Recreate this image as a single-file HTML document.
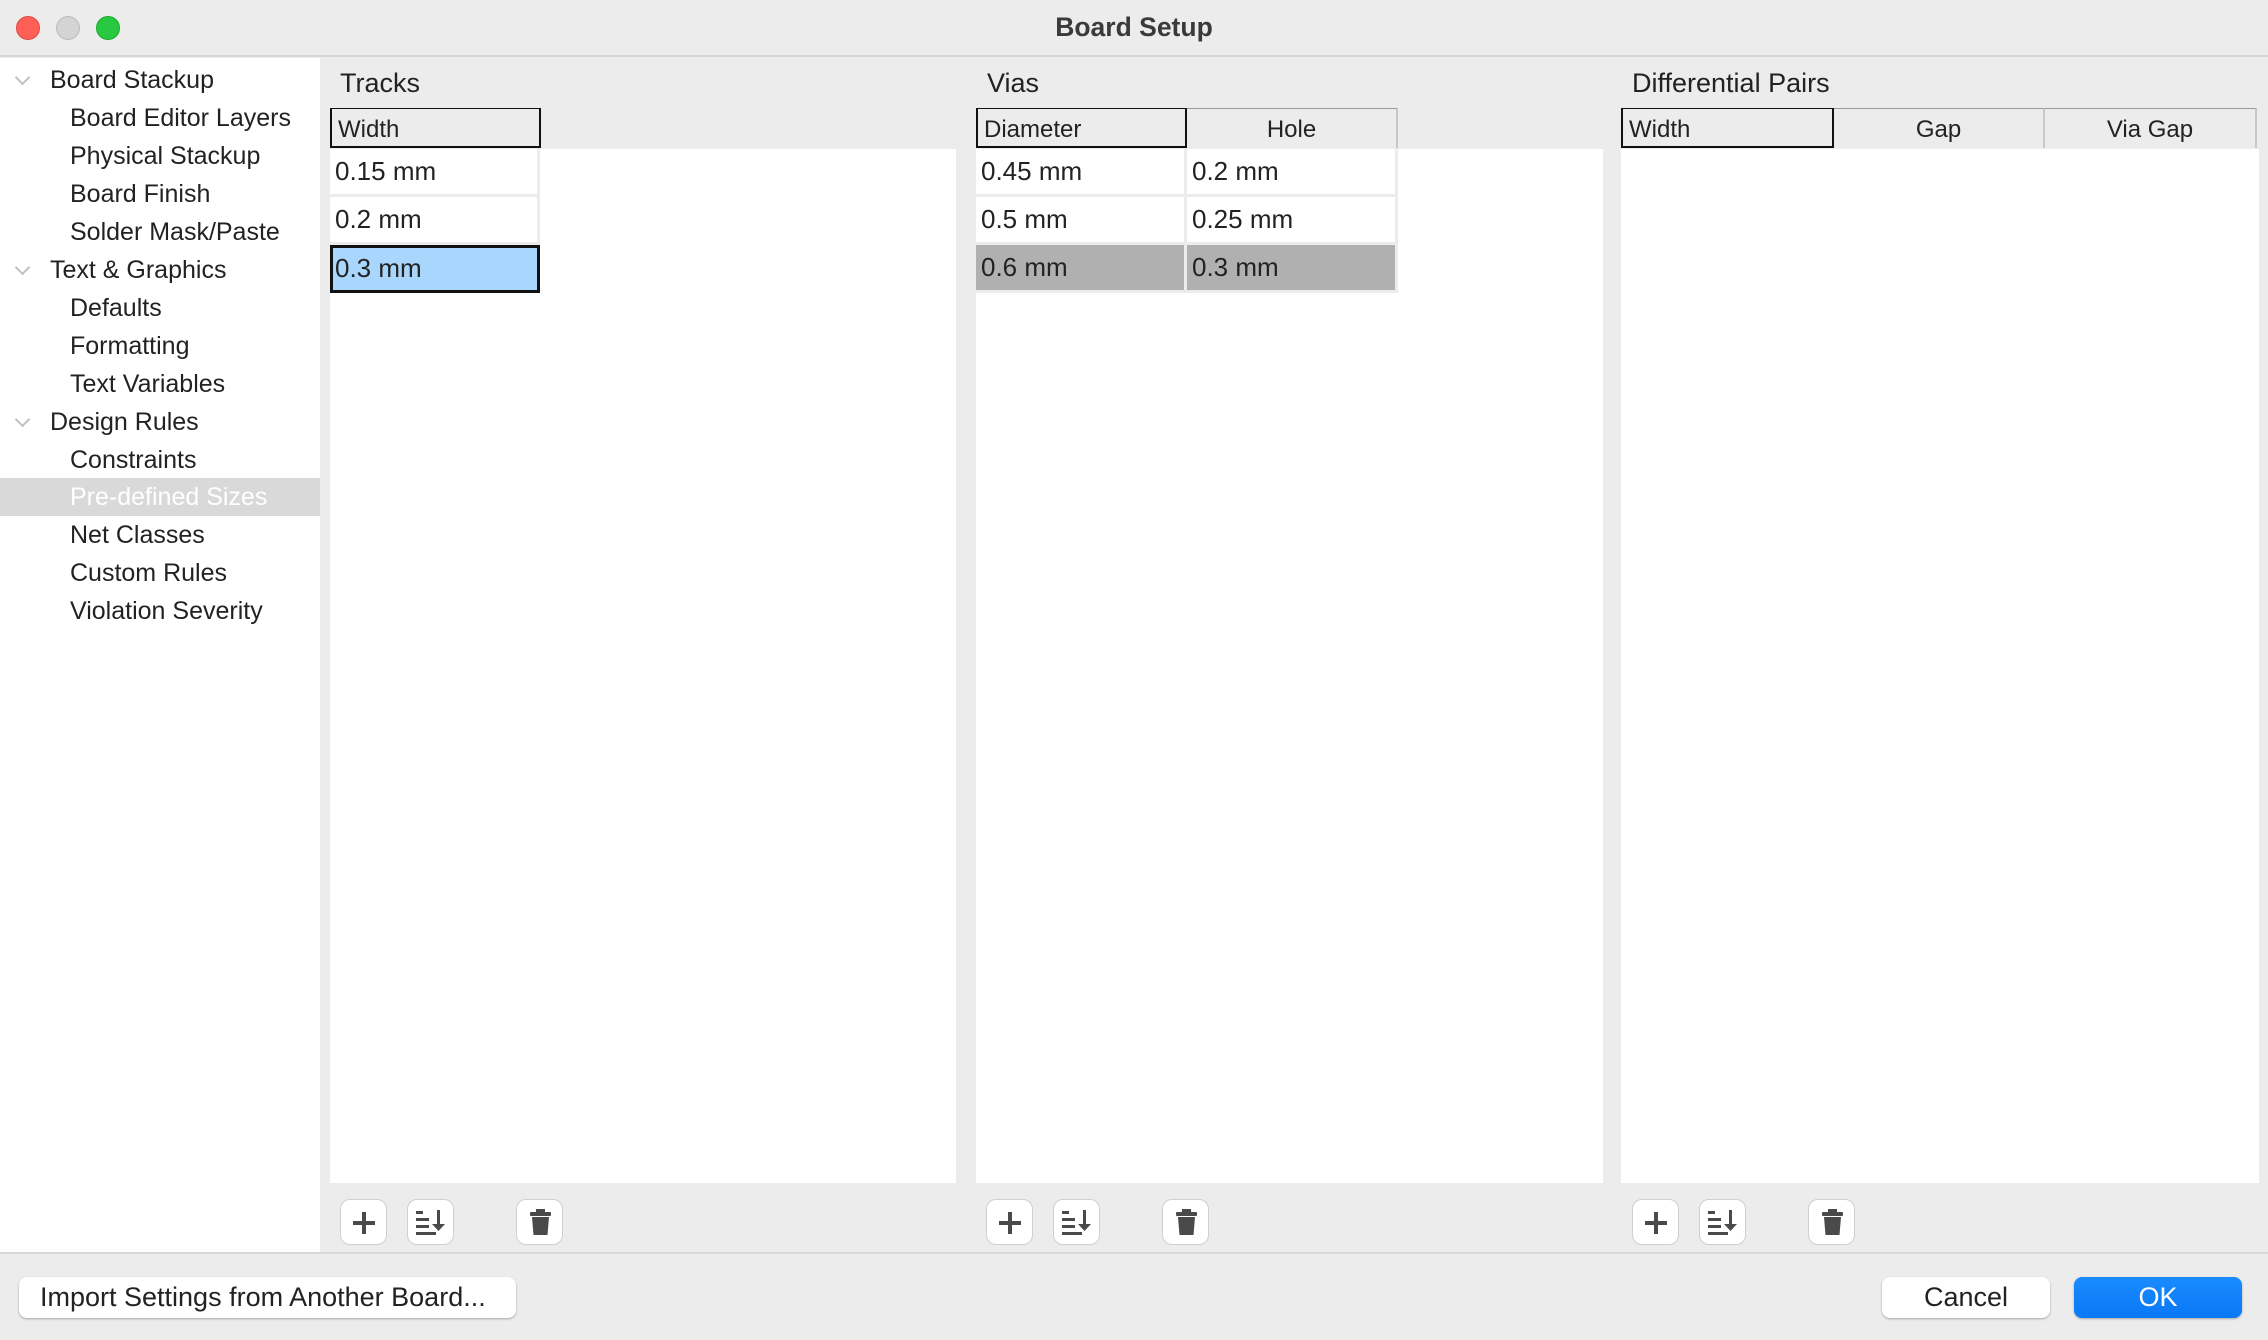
<!DOCTYPE html>
<html><head><meta charset="utf-8"><style>
*{box-sizing:border-box;margin:0;padding:0}
body{width:2268px;height:1340px;background:#ececec;font-family:"Liberation Sans",sans-serif;color:#222;position:relative;overflow:hidden;border-radius:14px}
.a{position:absolute}
.tb{left:0;top:0;width:2268px;height:57px;background:#ececec;border-bottom:2px solid #d6d6d6}
.dot{top:16px;width:24px;height:24px;border-radius:50%}
.side{left:0;top:58px;width:320px;height:1194px;background:#fff}
.it{position:absolute;left:0;width:320px;height:38px;line-height:38px;font-size:25px;color:#222;white-space:nowrap}
.chev{position:absolute;left:17px;top:11px;width:11px;height:11px;border-right:2px solid #c0c0c0;border-bottom:2px solid #c0c0c0;transform:rotate(45deg)}
.ptitle{font-size:27px;top:68px}
.panel{background:#fff;top:149px;height:1034px}
.hdr{top:108px;height:40px;background:#ececec;border-top:1px solid #9a9a9a;border-right:2px solid #c8c8c8;font-size:24px;line-height:42px;padding-left:6px}
.hdr.f{border:2px solid #111;border-top:1px solid #111;line-height:41px}
.hdr.c{text-align:center;padding-left:0}
.cell{height:48px;font-size:26px;line-height:45px;padding-left:5px;background:#fff;border-right:3px solid #ececec;border-bottom:3px solid #ececec}
.sel{background:#b0b0b0}
.ib{top:1199px;width:47px;height:46px;background:#fff;border:1.5px solid #cfcfcf;border-radius:10px}
.btn{top:1277px;height:41px;background:#fff;border-radius:8px;box-shadow:0 1px 2px rgba(0,0,0,.3);font-size:27px;line-height:41px;text-align:center}
</style></head><body>
<div class="a tb"></div>
<div class="a dot" style="left:16px;background:#fe5f57;border:1px solid #e14942"></div>
<div class="a dot" style="left:56px;background:#d4d4d4;border:1px solid #bdbdbd"></div>
<div class="a dot" style="left:96px;background:#28c840;border:1px solid #1aab29"></div>
<div class="a" style="left:0;width:2268px;top:12px;text-align:center;font-size:26.5px;font-weight:bold;color:#3a3a3a">Board Setup</div>

<div class="a side">
<div class="it" style="top:3px"><span class="chev"></span><span style="margin-left:50px">Board Stackup</span></div>
<div class="it" style="top:41px"><span style="margin-left:70px">Board Editor Layers</span></div>
<div class="it" style="top:79px"><span style="margin-left:70px">Physical Stackup</span></div>
<div class="it" style="top:117px"><span style="margin-left:70px">Board Finish</span></div>
<div class="it" style="top:155px"><span style="margin-left:70px">Solder Mask/Paste</span></div>
<div class="it" style="top:193px"><span class="chev"></span><span style="margin-left:50px">Text &amp; Graphics</span></div>
<div class="it" style="top:231px"><span style="margin-left:70px">Defaults</span></div>
<div class="it" style="top:269px"><span style="margin-left:70px">Formatting</span></div>
<div class="it" style="top:307px"><span style="margin-left:70px">Text Variables</span></div>
<div class="it" style="top:345px"><span class="chev"></span><span style="margin-left:50px">Design Rules</span></div>
<div class="it" style="top:383px"><span style="margin-left:70px">Constraints</span></div>
<div class="it" style="top:420px;background:#d9d9d9;color:#fff"><span style="margin-left:70px">Pre-defined Sizes</span></div>
<div class="it" style="top:458px"><span style="margin-left:70px">Net Classes</span></div>
<div class="it" style="top:496px"><span style="margin-left:70px">Custom Rules</span></div>
<div class="it" style="top:534px"><span style="margin-left:70px">Violation Severity</span></div>
</div>

<div class="a ptitle" style="left:340px">Tracks</div>
<div class="a panel" style="left:330px;width:626px"></div>
<div class="a hdr f" style="left:330px;width:211px">Width</div>
<div class="a cell" style="left:330px;top:149px;width:210px">0.15 mm</div>
<div class="a cell" style="left:330px;top:197px;width:210px">0.2 mm</div>
<div class="a cell" style="left:330px;top:245px;width:210px;background:#a9d6fd;border:3px solid #111;line-height:40px;padding-left:2px">0.3 mm</div>

<div class="a ptitle" style="left:987px">Vias</div>
<div class="a panel" style="left:976px;width:627px"></div>
<div class="a hdr f" style="left:976px;width:211px">Diameter</div>
<div class="a hdr c" style="left:1187px;width:211px">Hole</div>
<div class="a cell" style="left:976px;top:149px;width:211px">0.45 mm</div>
<div class="a cell" style="left:1187px;top:149px;width:211px">0.2 mm</div>
<div class="a cell" style="left:976px;top:197px;width:211px">0.5 mm</div>
<div class="a cell" style="left:1187px;top:197px;width:211px">0.25 mm</div>
<div class="a cell sel" style="left:976px;top:245px;width:211px">0.6 mm</div>
<div class="a cell sel" style="left:1187px;top:245px;width:211px">0.3 mm</div>

<div class="a ptitle" style="left:1632px">Differential Pairs</div>
<div class="a panel" style="left:1621px;width:638px"></div>
<div class="a hdr f" style="left:1621px;width:213px">Width</div>
<div class="a hdr c" style="left:1834px;width:211px">Gap</div>
<div class="a hdr c" style="left:2045px;width:212px">Via Gap</div>

<svg width="0" height="0" style="position:absolute"><defs>
<g id="plus"><path d="M23 12v22M12 23h22" stroke="#4a4a4a" stroke-width="4"/></g>
<g id="sort" fill="#4a4a4a"><rect x="8" y="11" width="7" height="3"/><rect x="8" y="18" width="13" height="3"/><rect x="8" y="25" width="13" height="3"/><rect x="8" y="32" width="20" height="3"/><path d="M29 10h3v14h5l-6.5 7-6.5-7h5z"/></g>
<g id="trash" fill="#4a4a4a"><rect x="19" y="9" width="9" height="3"/><rect x="13" y="12" width="21" height="4" rx="1"/><path d="M15 17h17l-1.5 18h-14z"/></g>
</defs></svg>
<svg class="a ib" style="left:340px"><use href="#plus"/></svg>
<svg class="a ib" style="left:407px"><use href="#sort"/></svg>
<svg class="a ib" style="left:516px"><use href="#trash"/></svg>
<svg class="a ib" style="left:986px"><use href="#plus"/></svg>
<svg class="a ib" style="left:1053px"><use href="#sort"/></svg>
<svg class="a ib" style="left:1162px"><use href="#trash"/></svg>
<svg class="a ib" style="left:1632px"><use href="#plus"/></svg>
<svg class="a ib" style="left:1699px"><use href="#sort"/></svg>
<svg class="a ib" style="left:1808px"><use href="#trash"/></svg>

<div class="a" style="left:0;top:1252px;width:2268px;height:2px;background:#d8d8d8"></div>
<div class="a btn" style="left:19px;width:497px;text-align:left;padding-left:21px">Import Settings from Another Board...</div>
<div class="a btn" style="left:1882px;width:168px">Cancel</div>
<div class="a btn" style="left:2074px;width:168px;background:linear-gradient(#1a8bff,#0a78f5);color:#fff">OK</div>
</body></html>
